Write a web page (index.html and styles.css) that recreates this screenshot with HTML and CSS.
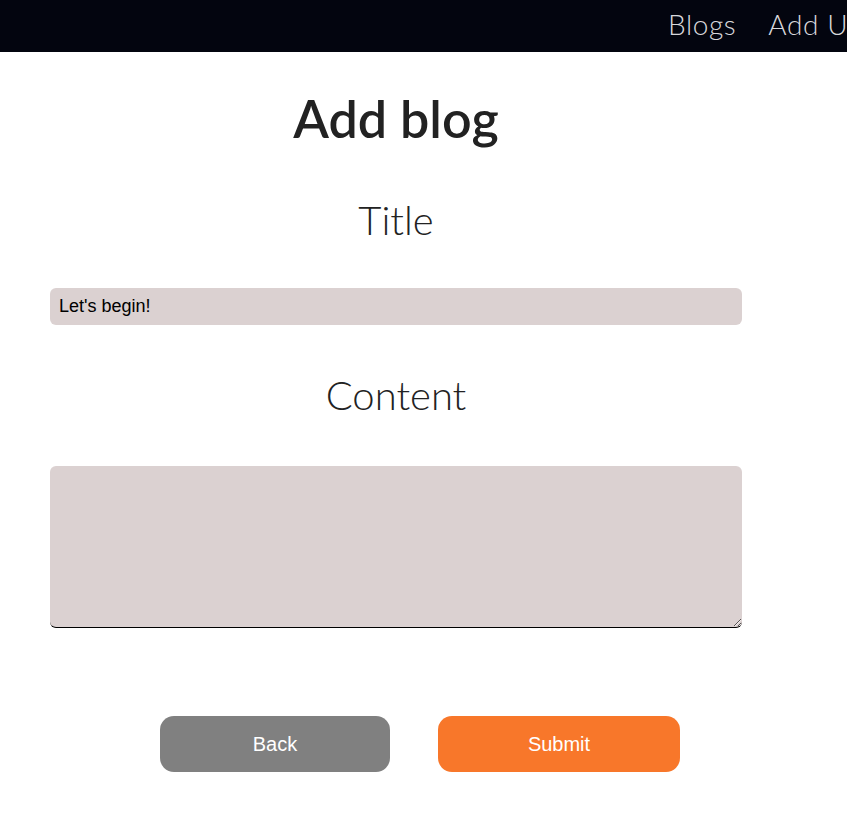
FILE: index.html
```html
<!DOCTYPE html>
<html>
<head>
<meta charset="utf-8">
<link rel="stylesheet" href="styles.css">
</head>
<body>
<nav class="navbar">
  <ul class="nav-links">
    <li><a href="#">Blogs</a></li>
    <li><a href="#">Add User</a></li>
  </ul>
</nav>
<main class="page">
  <h1 class="page-title">Add blog</h1>
  <form class="blog-form">
    <label class="field-label" for="title">Title</label>
    <input class="field-input" id="title" type="text" value="Let's begin!">
    <label class="field-label" for="content">Content</label>
    <textarea class="field-textarea" id="content"></textarea>
    <div class="actions">
      <button type="button" class="btn btn-back">Back</button>
      <button type="submit" class="btn btn-submit">Submit</button>
    </div>
  </form>
</main>
</body>
</html>
```
FILE: styles.css
```css
html, body {
  margin: 0;
  padding: 0;
  background: #ffffff;
  overflow: hidden;
}
body {
  font-family: "Lato", "Liberation Sans", sans-serif;
  color: #222222;
}
.navbar {
  height: 52px;
  background: #03050f;
  overflow: hidden;
}
.nav-links {
  list-style: none;
  margin: 0;
  padding: 0 0 0 668px;
  display: flex;
  gap: 32px;
  height: 48px;
  align-items: center;
  white-space: nowrap;
}
.nav-links a {
  color: #d8d8dc;
  text-decoration: none;
  font-size: 28px;
  font-weight: 300;
  letter-spacing: 0.6px;
}
.page {
  width: 692px;
  margin-left: 50px;
}
.page-title {
  margin: 36px 0 0;
  text-align: center;
  font-size: 52px;
  font-weight: 600;
  line-height: 60px;
  color: #222222;
}
.blog-form {
  display: flex;
  flex-direction: column;
}
.field-label {
  display: block;
  text-align: center;
  font-size: 40px;
  font-weight: 300;
  line-height: 50px;
  color: #222222;
}
.blog-form .field-label:first-child {
  margin-top: 47px;
}
.field-input {
  margin-top: 43px;
  height: 37px;
  box-sizing: border-box;
  border: none;
  border-radius: 6px;
  background: #dbd1d1;
  padding: 0 9px;
  font-family: "Liberation Sans", Arial, sans-serif;
  font-size: 18px;
  color: #000000;
}
.field-input + .field-label {
  margin-top: 45px;
}
.field-textarea {
  margin-top: 46px;
  height: 162px;
  box-sizing: border-box;
  border: none;
  border-bottom: 1px solid #000000;
  border-radius: 6px;
  background: #dbd1d1;
  font-family: "Liberation Sans", Arial, sans-serif;
  font-size: 18px;
}
.actions {
  display: flex;
  justify-content: center;
  gap: 48px;
  margin-top: 88px;
  padding-left: 48px;
}
.btn {
  height: 56px;
  border: none;
  border-radius: 14px;
  color: #ffffff;
  font-family: "Liberation Sans", Arial, sans-serif;
  font-size: 20px;
  cursor: pointer;
}
.btn-back {
  width: 230px;
  background: #808080;
}
.btn-submit {
  width: 242px;
  background: #f8772a;
}
```
